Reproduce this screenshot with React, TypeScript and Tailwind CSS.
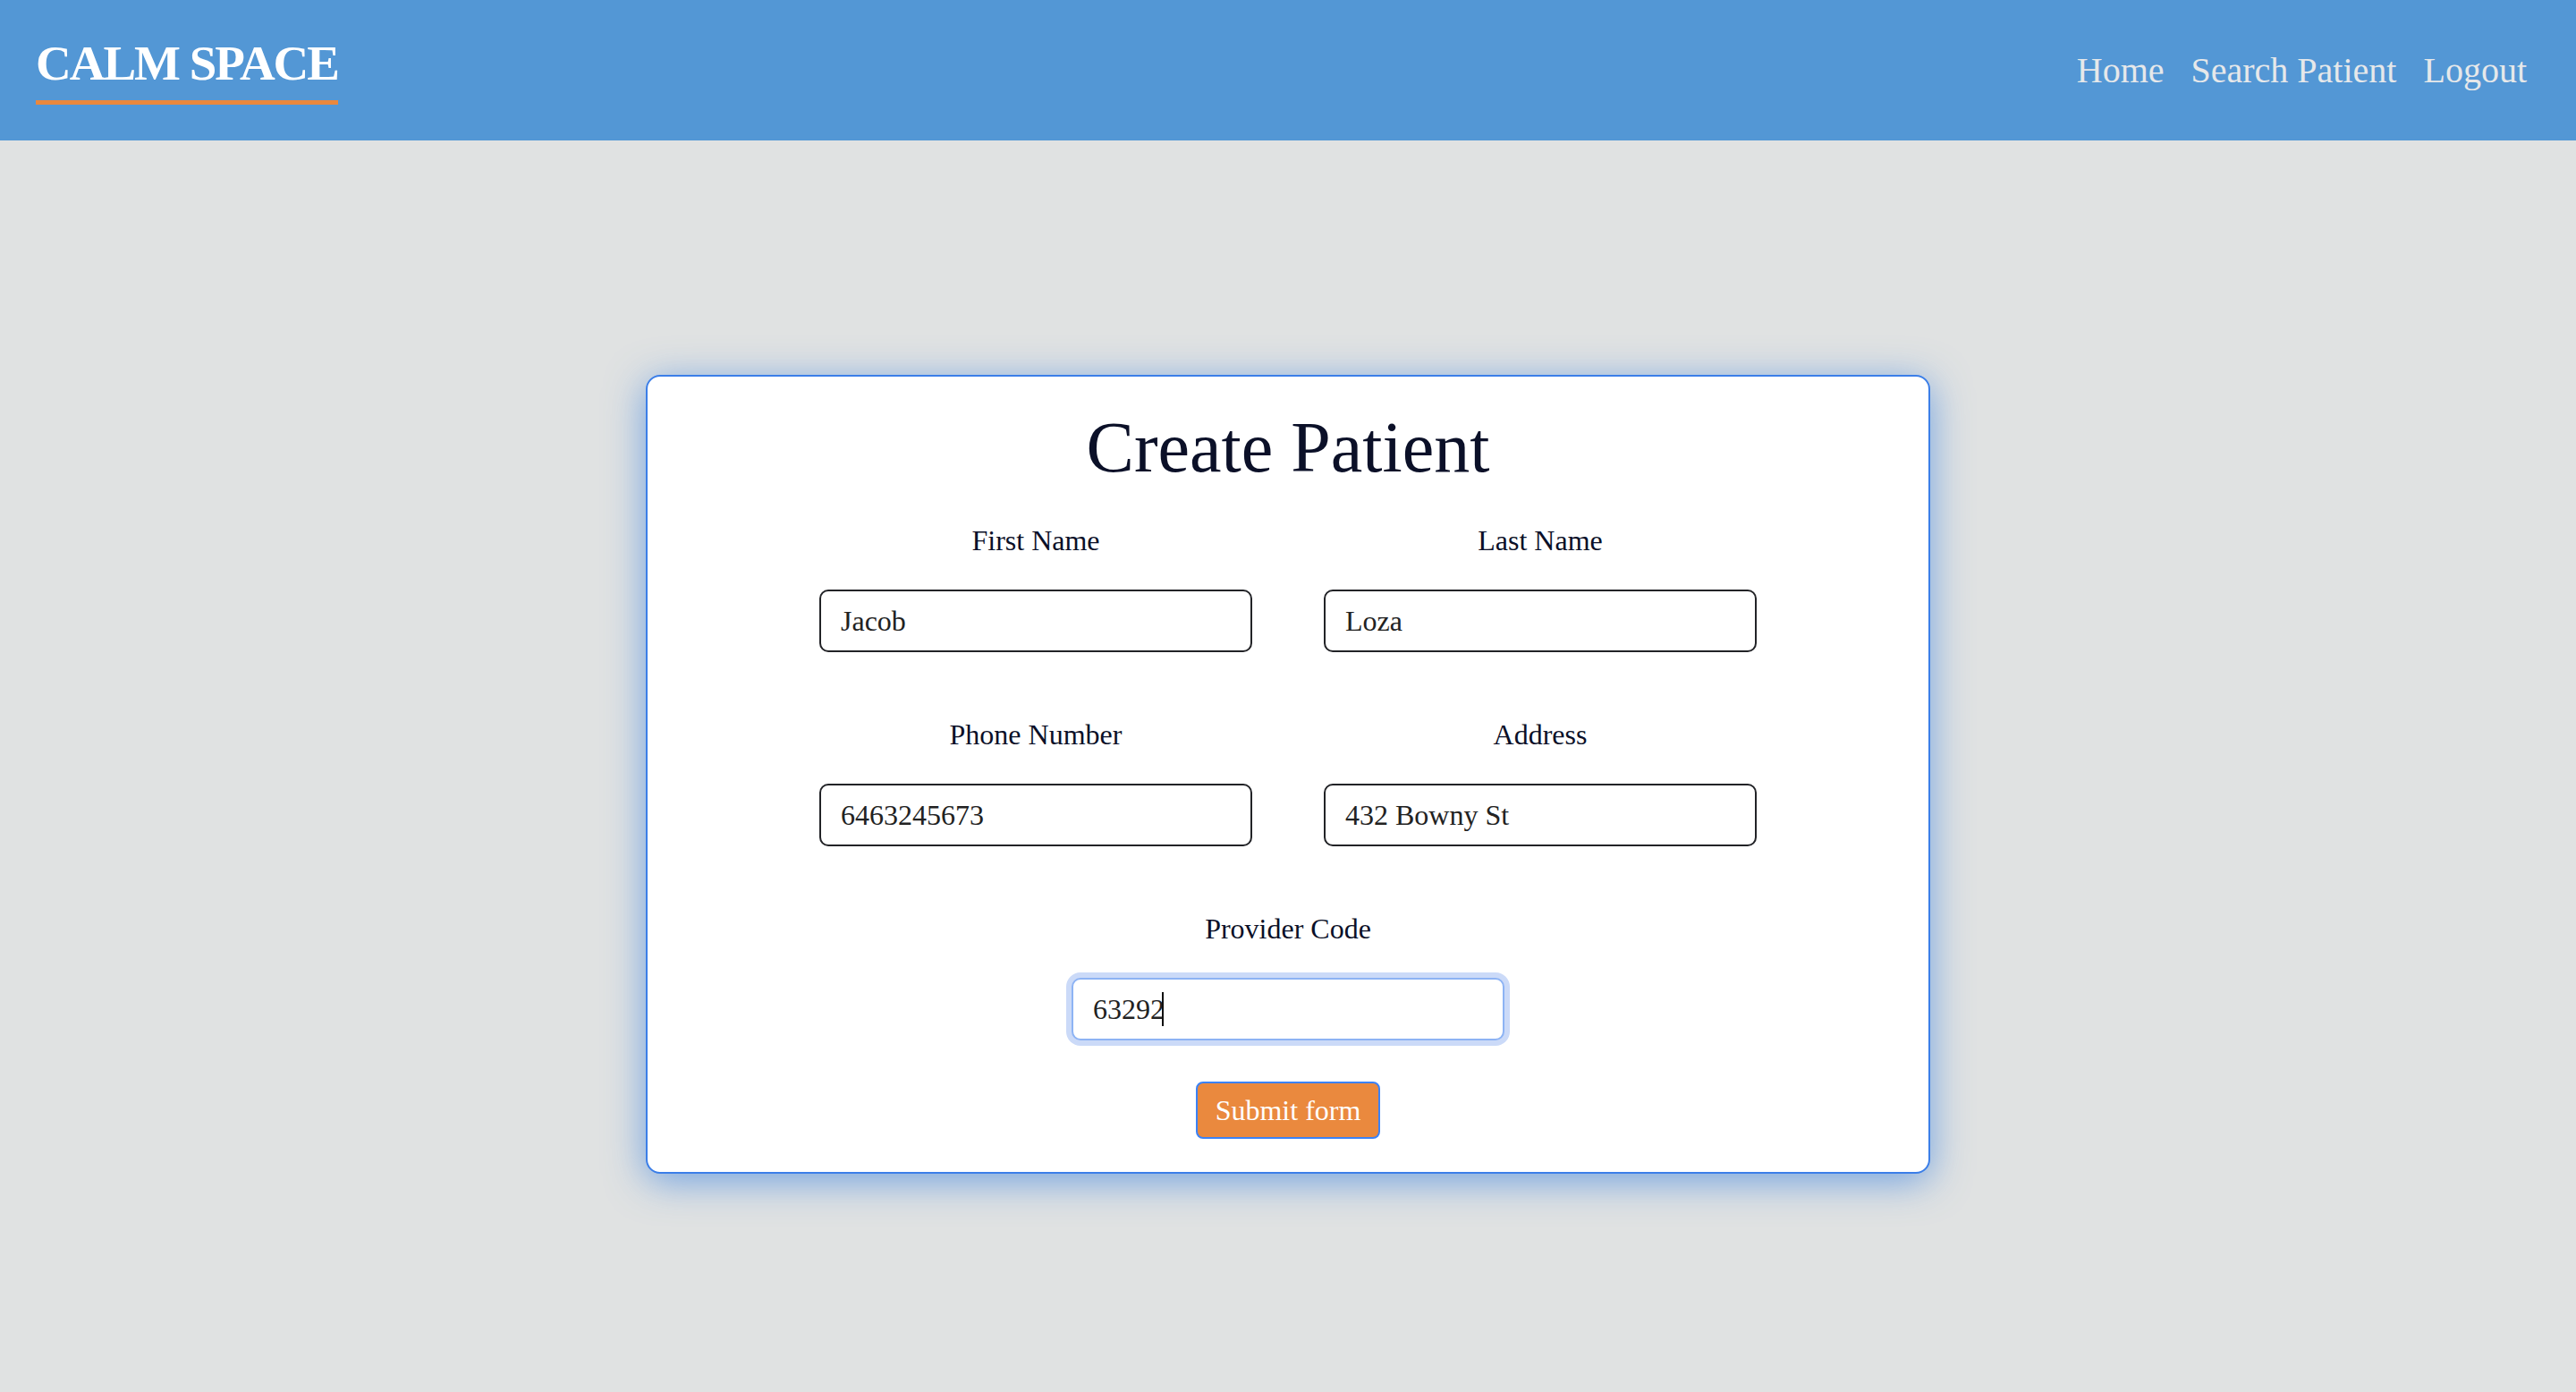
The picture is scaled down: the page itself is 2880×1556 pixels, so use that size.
import React from "react";

function Field({ label, value, focused }: { label: string; value: string; focused?: boolean }) {
  return (
    <div className="flex flex-col items-center">
      <label className="block h-[48px] leading-[48px] text-[32px] text-[#0b1028]">{label}</label>
      <div className="relative mt-[31px] w-[484px]">
        <input
          readOnly
          value={value}
          className={
            focused
              ? "block h-[70px] w-full rounded-[10px] border-2 border-[#8db3f4] bg-white pl-[22px] text-[32px] text-[#222] outline-none ring-[6px] ring-[#cbdaf8] font-['Liberation_Serif',serif]"
              : "block h-[70px] w-full rounded-[10px] border-2 border-[#222327] bg-white pl-[22px] text-[32px] text-[#222] outline-none font-['Liberation_Serif',serif]"
          }
        />
        {focused && (
          <span className="pointer-events-none absolute left-[101px] top-[16px] h-[38px] w-[2px] bg-[#111]" />
        )}
      </div>
    </div>
  );
}

export default function App() {
  return (
    <div className="min-h-screen bg-[#e0e2e2] font-['Liberation_Serif',serif]">
      <header className="flex h-[157px] items-center justify-between bg-[#5397d5] pl-[40px] pr-[55px]">
        <div className="border-b-[5px] border-[#ea883d] pb-[11px]">
          <span className="block text-[55px] font-bold leading-[60px] tracking-[-2px] text-white">CALM SPACE</span>
        </div>
        <nav className="flex items-center gap-[30px] text-[40px] text-[#e6e8ea]">
          <a>Home</a>
          <a>Search Patient</a>
          <a>Logout</a>
        </nav>
      </header>

      <main className="flex justify-center pt-[262px]">
        <div className="w-[1436px] rounded-[16px] border-2 border-[#3b7ee8] bg-white pb-[37px] pt-[31px] shadow-[0_8px_44px_rgba(66,135,225,0.7)]">
          <h1 className="text-center text-[80px] leading-[96px] text-[#0b1028]">Create Patient</h1>
          <div className="mx-auto mt-[32px] grid w-[1048px] grid-cols-2 gap-x-[80px] gap-y-[68px]">
            <Field label="First Name" value="Jacob" />
            <Field label="Last Name" value="Loza" />
            <Field label="Phone Number" value="6463245673" />
            <Field label="Address" value="432 Bowny St" />
          </div>
          <div className="mt-[68px] flex justify-center">
            <Field label="Provider Code" value="63292" focused />
          </div>
          <div className="mt-[46px] flex justify-center">
            <button className="h-[64px] rounded-[8px] border-2 border-[#3b82f6] bg-[#ea893e] px-[20px] text-[32px] leading-[40px] text-white">
              Submit form
            </button>
          </div>
        </div>
      </main>
    </div>
  );
}
